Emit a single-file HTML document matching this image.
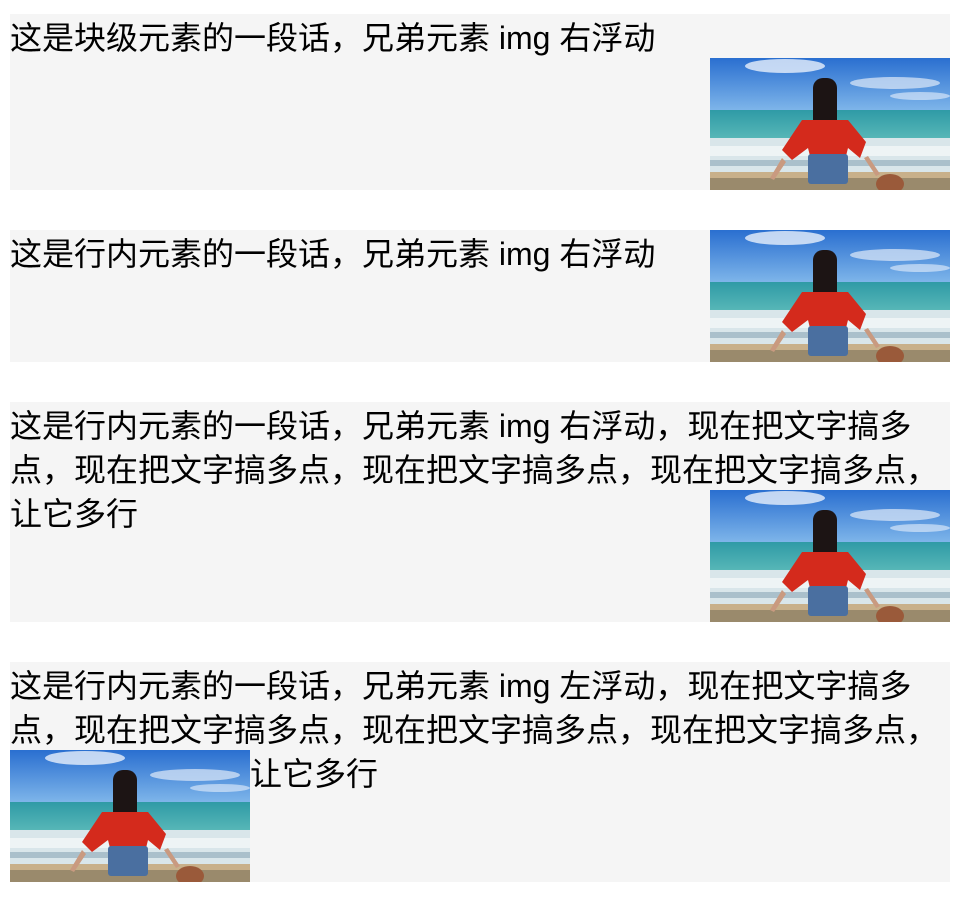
<!DOCTYPE html>
<html><head><meta charset="utf-8">
<style>
html,body{margin:0;padding:0;background:#fff;}
body{width:962px;height:898px;overflow:hidden;font-family:"Liberation Sans","Noto Sans CJK SC",sans-serif;font-size:32px;line-height:44px;color:#000;}
.box{position:absolute;left:10px;width:940px;background:#f5f5f5;display:flow-root;}
p{margin:0;}
.img{width:240px;height:132px;display:block;}
.r{float:right;}
.l{float:left;}
.t{position:relative;top:2px;}
</style></head><body>
<svg width="0" height="0" style="position:absolute">
<defs>
<linearGradient id="sky" x1="0" y1="0" x2="0" y2="1"><stop offset="0" stop-color="#2a6fd0"/><stop offset="1" stop-color="#7fb6ea"/></linearGradient>
<linearGradient id="sea" x1="0" y1="0" x2="0" y2="1"><stop offset="0" stop-color="#2f9aa6"/><stop offset="1" stop-color="#59b8b8"/></linearGradient>
<symbol id="pic" viewBox="0 0 240 132">
<rect width="240" height="53" fill="url(#sky)"/>
<ellipse cx="75" cy="8" rx="40" ry="7" fill="#e8f0fb" opacity=".8"/>
<ellipse cx="185" cy="25" rx="45" ry="6" fill="#dfeaf8" opacity=".7"/>
<ellipse cx="210" cy="38" rx="30" ry="4" fill="#e8f0fb" opacity=".6"/>
<rect y="52" width="240" height="30" fill="url(#sea)"/>
<rect y="80" width="240" height="36" fill="#d9e6ea"/>
<rect y="88" width="240" height="10" fill="#eef4f5"/>
<rect y="102" width="240" height="6" fill="#8aa6b5" opacity=".6"/>
<rect y="114" width="240" height="18" fill="#c8b08a"/>
<rect y="120" width="240" height="12" fill="#9a8a6c"/>
<rect x="103" y="20" width="24" height="52" rx="10" fill="#1c1414"/>
<path d="M92 62 L138 62 L156 84 L150 100 L138 90 L136 98 L100 98 L98 90 L82 102 L72 92 Z" fill="#d42a1c"/>
<rect x="98" y="96" width="40" height="30" rx="3" fill="#4a6fa0"/>
<path d="M72 100 L60 120 L64 122 L76 104Z M158 98 L170 116 L166 118 L154 100Z" fill="#c99a80"/>
<ellipse cx="180" cy="126" rx="14" ry="10" fill="#9a5a3a"/>
</symbol>
</defs></svg>

<div class="box" style="top:14px;">
<p class="t">这是块级元素的一段话，兄弟元素 img 右浮动</p>
<svg class="img r"><use href="#pic"/></svg>
</div>

<div class="box" style="top:230px;">
<svg class="img r"><use href="#pic"/></svg>
<span class="t">这是行内元素的一段话，兄弟元素 img 右浮动</span>
</div>

<div class="box" style="top:402px;">
<span class="t">这是行内元素的一段话，兄弟元素 img 右浮动，现在把文字搞多<br>点，现在把文字搞多点，现在把文字搞多点，现在把文字搞多点，<br></span><svg class="img r"><use href="#pic"/></svg><span class="t">让它多行</span>
</div>

<div class="box" style="top:662px;">
<span class="t">这是行内元素的一段话，兄弟元素 img 左浮动，现在把文字搞多<br>点，现在把文字搞多点，现在把文字搞多点，现在把文字搞多点，<br></span><svg class="img l"><use href="#pic"/></svg><span class="t">让它多行</span>
</div>
</body></html>
